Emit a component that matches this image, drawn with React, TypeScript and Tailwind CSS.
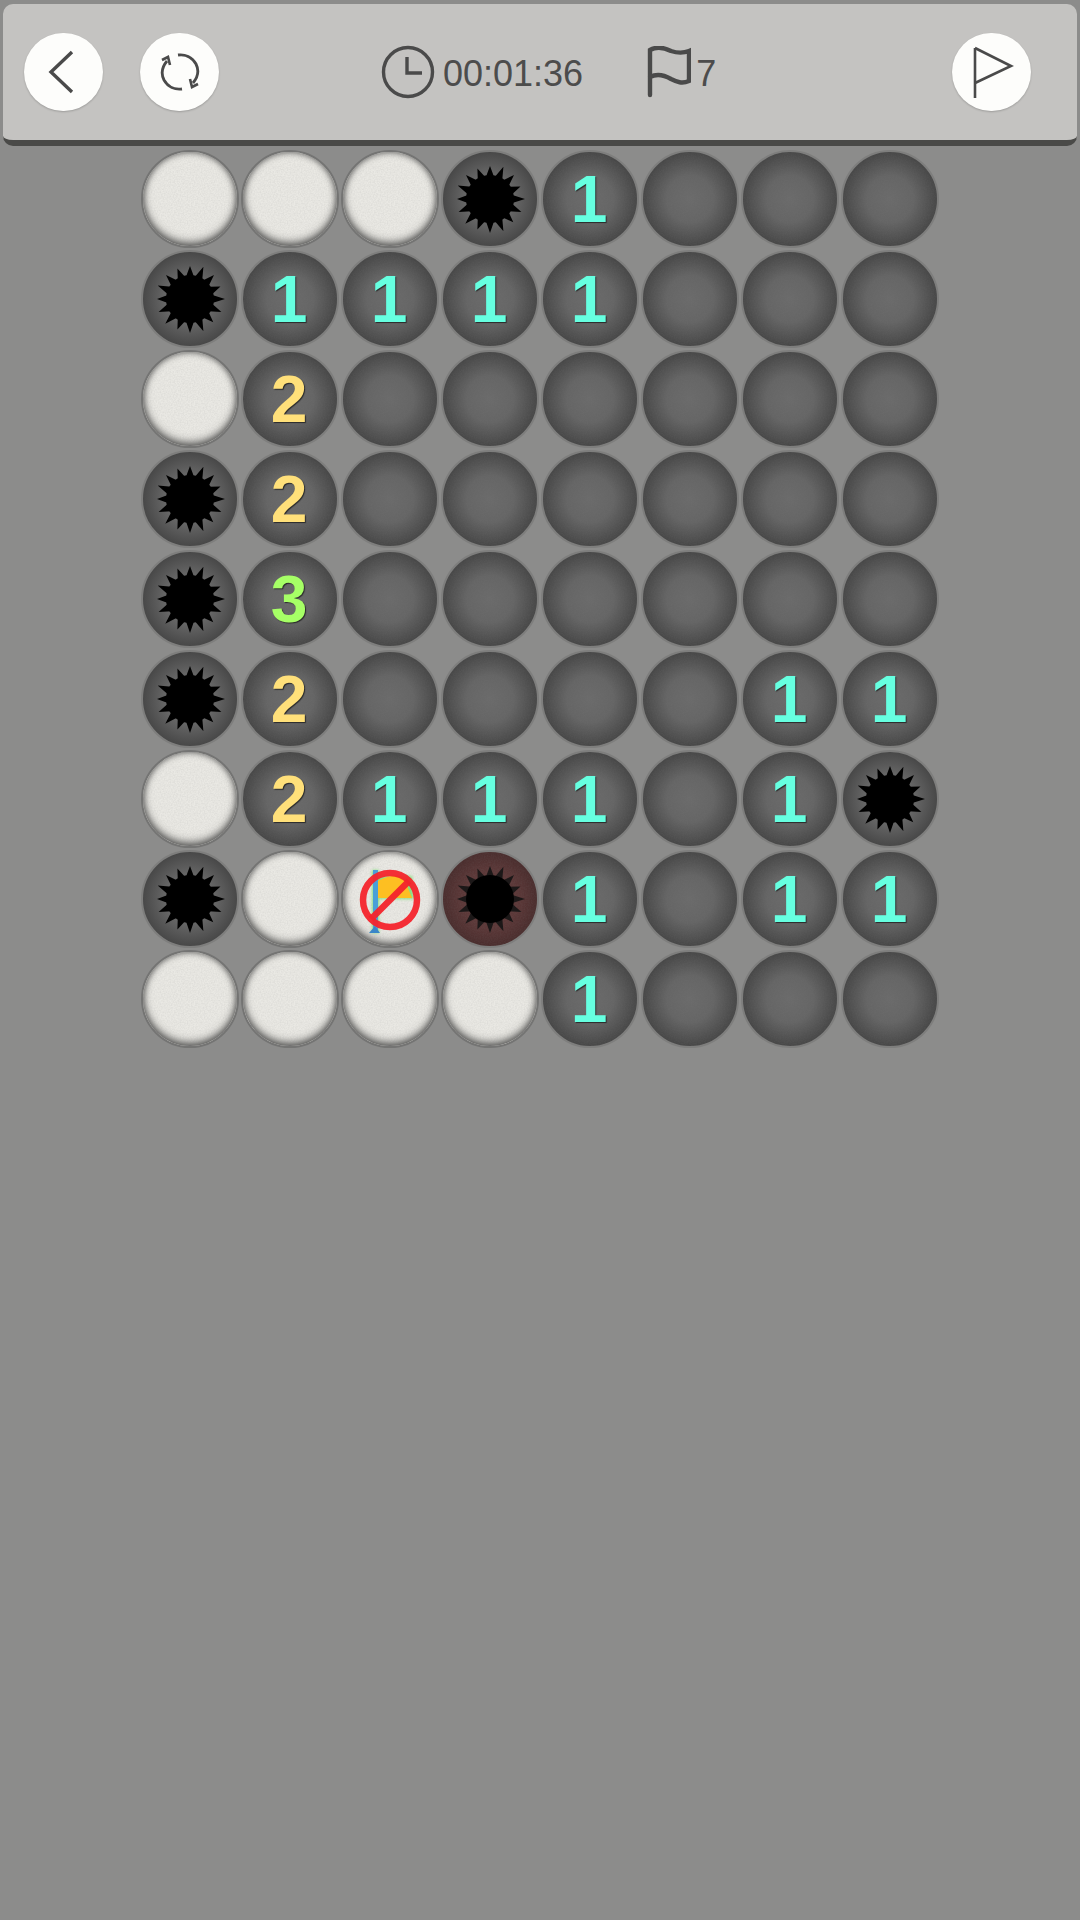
import React from 'react';

type Cell = 'w' | 'e' | 'b' | 'r' | 'x' | '1' | '2' | '3';

const BOARD: Cell[][] = [
  ['w', 'w', 'w', 'b', '1', 'e', 'e', 'e'],
  ['b', '1', '1', '1', '1', 'e', 'e', 'e'],
  ['w', '2', 'e', 'e', 'e', 'e', 'e', 'e'],
  ['b', '2', 'e', 'e', 'e', 'e', 'e', 'e'],
  ['b', '3', 'e', 'e', 'e', 'e', 'e', 'e'],
  ['b', '2', 'e', 'e', 'e', 'e', '1', '1'],
  ['w', '2', '1', '1', '1', 'e', '1', 'b'],
  ['b', 'w', 'x', 'r', '1', 'e', '1', '1'],
  ['w', 'w', 'w', 'w', '1', 'e', 'e', 'e'],
];

// spiky outline of the mine, tips are a bit uneven like in the game art
function burstPoints() {
  const pts: string[] = [];
  const n = 16;
  for (let i = 0; i < n * 2; i++) {
    const a = (i / (n * 2)) * Math.PI * 2 - Math.PI / 2;
    const r = i % 2 === 0 ? 33 + (i % 3) : 22;
    pts.push(`${(40 + r * Math.cos(a)).toFixed(1)},${(40 + r * Math.sin(a)).toFixed(1)}`);
  }
  return pts.join(' ');
}

function Burst({ sharp }: { sharp?: boolean }) {
  return (
    <svg width="80" height="80" viewBox="0 0 80 80">
      <polygon points={burstPoints()} fill={sharp ? '#1c1818' : '#000'} filter={sharp ? undefined : 'url(#soft)'} />
      <circle cx="40" cy="40" r="24" fill="#000" />
    </svg>
  );
}

function NoFlag() {
  return (
    <svg width="72" height="72" viewBox="0 0 72 72">
      <g filter="url(#glow)" opacity="0.7">
        <rect x="18" y="7" width="7" height="63" fill="#62e05a" />
        <path d="M24 13 H58 L60 36 H24 Z" fill="#62e05a" />
      </g>
      <rect x="19" y="7" width="5" height="60" fill="#4a9fd8" />
      <path d="M15 70 L21 63 L26 70 Z" fill="#3a86c8" />
      <path d="M24 18 Q42 9 50 15 L58 35 H24 Z" fill="#fdbf22" />
      <circle cx="36" cy="37" r="27" fill="none" stroke="#f4242c" strokeWidth="6.5" opacity="0.95" />
      <path d="M17 56 L55 18" stroke="#f4242c" strokeWidth="6.5" opacity="0.95" />
    </svg>
  );
}

function Grain({ opacity }: { opacity: string }) {
  return (
    <svg className={`absolute inset-0 rounded-full ${opacity}`} width="94" height="94">
      <rect width="94" height="94" filter="url(#grain)" />
    </svg>
  );
}

function Tile({ cell }: { cell: Cell }) {
  if (cell === 'w' || cell === 'x') {
    return (
      <div className="relative flex h-[98px] w-[98px] items-center justify-center rounded-full border-2 border-[#747473] bg-[#eae9e4] shadow-[inset_0_-4px_8px_rgba(50,50,50,0.6),inset_0_0_6px_rgba(60,60,60,0.75)]">
        <Grain opacity="opacity-10" />
        {cell === 'x' && <div className="relative flex"><NoFlag /></div>}
      </div>
    );
  }
  const base =
    'relative flex h-[98px] w-[98px] items-center justify-center rounded-full border-2 border-[#7e7e7d] font-bold text-[66px] leading-none [text-shadow:1px_1px_1px_#2a2a2a]';
  if (cell === 'r') {
    return (
      <div className={`${base} bg-[radial-gradient(circle_closest-side,#5e3a3a_0%,#5c3838_60%,#4a2d2d_100%)]`}>
        <Grain opacity="opacity-10" />
        <div className="relative flex"><Burst sharp /></div>
      </div>
    );
  }
  if (cell === 'b') {
    return (
      <div className={`${base} bg-[radial-gradient(circle_closest-side,#6e6e6e_0%,#686868_50%,#484848_100%)]`}>
        <div className="relative flex"><Burst /></div>
      </div>
    );
  }
  const color =
    cell === '1' ? 'text-[#66ffe0]' : cell === '2' ? 'text-[#ffe07a]' : cell === '3' ? 'text-[#a6ff66]' : '';
  return (
    <div className={`${base} ${color} bg-[radial-gradient(circle_closest-side,#6b6b6b_0%,#656565_50%,#474747_100%)]`}>
      <Grain opacity="opacity-10" />
      {cell !== 'e' && <span className="relative pr-[2px]">{cell}</span>}
    </div>
  );
}

function RoundButton({ children }: { children: React.ReactNode }) {
  return (
    <button className="flex h-[78px] w-[79px] items-center justify-center rounded-full bg-[#fdfdfb] shadow-[0_1px_2px_rgba(0,0,0,0.2)]">
      {children}
    </button>
  );
}

export default function App() {
  return (
    <div className="min-h-[1920px] bg-[#8c8c8b] pt-[4px] font-['Liberation_Sans',sans-serif]">
      <svg width="0" height="0" className="absolute">
        <defs>
          <filter id="soft"><feGaussianBlur stdDeviation="0.5" /></filter>
          <filter id="glow"><feGaussianBlur stdDeviation="1.6" /></filter>
          <filter id="grain">
            <feTurbulence type="fractalNoise" baseFrequency="0.7" numOctaves="2" />
            <feColorMatrix values="0 0 0 0 0.2  0 0 0 0 0.2  0 0 0 0 0.2  0 0 0 2 -0.6" />
          </filter>
        </defs>
      </svg>
      <header className="mx-[3px] flex h-[142px] items-center rounded-[10px] border-b-[6px] border-[#4a4a48] bg-[#c4c3c1] pl-[21px] pr-[46px] text-[36px] text-[#4c4c4c]">
        <RoundButton>
          <svg width="44" height="44" viewBox="0 0 44 44" fill="none" stroke="#4a4a4a" strokeWidth="3.4">
            <path d="M30 2 L9 22 L30 42" />
          </svg>
        </RoundButton>
        <div className="ml-[37px]">
          <RoundButton>
            <svg width="40" height="40" viewBox="0 0 40 40" fill="none" stroke="#4a4a4a" strokeWidth="2.8">
              <path d="M7 9 C2 15 1 22 4 28 C8 35 15 38 22 37" />
              <path d="M33 31 C38 25 39 18 36 12 C32 5 25 2 18 3" />
              <path d="M2 8 L8 5 L10 13" strokeWidth="2.6" />
              <path d="M38 32 L32 35 L30 27" strokeWidth="2.6" />
            </svg>
          </RoundButton>
        </div>
        <div className="ml-[162px] flex items-center gap-[8px]">
          <svg width="54" height="54" viewBox="0 0 54 54" fill="none" stroke="#4a4a4a" strokeWidth="3.4">
            <circle cx="27" cy="27" r="24.5" />
            <path d="M26 12 V28 H41" />
          </svg>
          <span className="pt-[4px]">00:01:36</span>
        </div>
        <div className="ml-[64px] flex items-center gap-[5px]">
          <svg width="44" height="52" viewBox="0 0 44 52" fill="none" stroke="#4a4a4a" strokeWidth="4.4" strokeLinecap="round">
            <path d="M3 49 V4 C10 0 18 2 24 5 C30 7 37 7 42 5 V35 C35 38 30 36 24 33 C17 29 9 28 3 31" />
          </svg>
          <span className="pt-[4px]">7</span>
        </div>
        <div className="ml-auto">
          <RoundButton>
            <svg width="46" height="52" viewBox="0 0 46 52" fill="none" stroke="#4a4a4a" strokeWidth="2.6">
              <path d="M6 2 V52" />
              <path d="M6 2 L42 20 L6 37" />
            </svg>
          </RoundButton>
        </div>
      </header>
      <main className="mx-auto mt-[4px] grid w-[800px] grid-cols-8 gap-y-[2px] justify-items-center">
        {BOARD.flat().map((cell, i) => (
          <Tile key={i} cell={cell} />
        ))}
      </main>
    </div>
  );
}
